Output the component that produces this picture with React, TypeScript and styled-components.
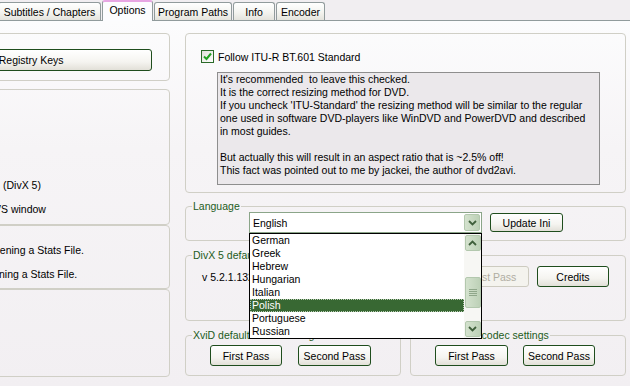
import React from "react";
import styled, { createGlobalStyle } from "styled-components";

const GlobalStyle = createGlobalStyle`
  html, body {
    margin: 0;
    padding: 0;
  }
  body {
    background: #f1eef1;
    font-family: "Liberation Sans", Arial, sans-serif;
    font-size: 10.5px;
    color: #000;
  }
`;

const Window = styled.div`
  width: 630px;
  height: 386px;
  overflow: hidden;
  display: flex;
  flex-direction: column;
`;

const TabStrip = styled.div`
  display: flex;
  align-items: flex-end;
  gap: 1px;
  height: 21px;
  margin-left: -2px;
`;

const Tab = styled.div<{ $w: number; $active?: boolean }>`
  position: relative;
  box-sizing: border-box;
  width: ${(p) => p.$w}px;
  height: ${(p) => (p.$active ? 21 : 18)}px;
  margin-bottom: ${(p) => (p.$active ? 0 : 1)}px;
  padding-bottom: ${(p) => (p.$active ? 3 : 0)}px;
  display: flex;
  align-items: center;
  justify-content: center;
  white-space: nowrap;
  border: 1px solid #919b9c;
  border-bottom: none;
  border-top: ${(p) => (p.$active ? "2px solid #e7a6e3" : "1px solid #919b9c")};
  border-radius: 3px 3px 0 0;
  background: ${(p) =>
    p.$active ? "#fcfcfe" : "linear-gradient(#ffffff, #f4f4f0 55%, #e4e3dd)"};
  z-index: ${(p) => (p.$active ? 2 : 1)};
`;

const Pane = styled.div`
  flex: 1;
  margin-top: -1px;
  border-top: 1px solid #919b9c;
  background: linear-gradient(#fcfcfd, #f6f4f6 35%, #f2eff2);
  display: flex;
  padding-top: 12px;
`;

const LeftCol = styled.div`
  width: 320px;
  margin-left: -150px;
  flex-shrink: 0;
  display: flex;
  flex-direction: column;
`;

const RightCol = styled.div`
  width: 441px;
  margin-left: 15px;
  flex-shrink: 0;
  display: flex;
  flex-direction: column;
`;

const Group = styled.fieldset<{ $h: number; $gap?: number; $w?: number }>`
  box-sizing: border-box;
  margin: ${(p) => p.$gap ?? 0}px 0 0 0;
  min-width: 0;
  width: ${(p) => (p.$w ? `${p.$w}px` : "auto")};
  height: ${(p) => p.$h}px;
  padding: 0;
  border: 1px solid #d0cfc6;
  border-radius: 4px;
`;

const Legend = styled.legend`
  margin-left: 6px;
  padding: 0 1px;
  color: #1d5c1b;
  line-height: 12px;
  white-space: nowrap;
`;

const Inner = styled.div<{ $pad: string; $gap?: number; $col?: boolean; $end?: boolean }>`
  display: flex;
  flex-direction: ${(p) => (p.$col ? "column" : "row")};
  justify-content: ${(p) => (p.$end ? "flex-end" : "flex-start")};
  align-items: ${(p) => (p.$col ? "stretch" : "center")};
  gap: ${(p) => p.$gap ?? 0}px;
  padding: ${(p) => p.$pad};
  box-sizing: border-box;
`;

const OptionRow = styled.div<{ $indent: number }>`
  height: 24px;
  display: flex;
  align-items: center;
  padding-left: ${(p) => p.$indent}px;
  white-space: nowrap;
`;

const Button = styled.button<{ $w: number; $h?: number }>`
  box-sizing: border-box;
  width: ${(p) => p.$w}px;
  height: ${(p) => p.$h ?? 21}px;
  padding: 0;
  font: inherit;
  color: #000;
  white-space: nowrap;
  border: 1px solid #1f4d1d;
  border-radius: 3px;
  background: linear-gradient(#ffffff, #f5f4f0 60%, #e2e0d8);
  flex-shrink: 0;

  &:disabled {
    color: #b0ada2;
    border-color: #cdcbc0;
    background: #f4f3ee;
  }
`;

const CheckRow = styled.label`
  display: flex;
  align-items: center;
  gap: 4px;
  height: 13px;
`;

const CheckBox = styled.span`
  box-sizing: border-box;
  width: 13px;
  height: 13px;
  border: 1px solid #2a6a28;
  background: linear-gradient(135deg, #e0e0da, #ffffff);
  display: flex;
  align-items: center;
  justify-content: center;
`;

const InfoBox = styled.div`
  box-sizing: border-box;
  width: 383px;
  height: 113px;
  margin: 9px 0 0 16px;
  padding: 0 2px;
  border: 1px solid #8e8e8e;
  background: #ebe8eb;
  line-height: 13px;
  white-space: pre;
`;

const ComboWrap = styled.div`
  position: relative;
  box-sizing: border-box;
  width: 233px;
  height: 21px;
  border: 1px solid #8ba589;
  background: #fff;
  display: flex;
  align-items: center;
  padding: 0 1px 0 3px;
`;

const ComboText = styled.span`
  flex: 1;
`;

const ArrowBtn = styled.span<{ $h?: number }>`
  box-sizing: border-box;
  width: 16px;
  height: ${(p) => p.$h ?? 17}px;
  border: 1px solid #b3c8ae;
  border-radius: 2px;
  background: linear-gradient(90deg, #d4e2ce, #bdd1b7);
  display: flex;
  align-items: center;
  justify-content: center;
  flex-shrink: 0;
`;

const DropList = styled.div`
  position: absolute;
  top: 20px;
  left: -1px;
  width: 233px;
  height: 106px;
  box-sizing: border-box;
  border: 1px solid #000;
  background: #fff;
  display: flex;
  z-index: 10;
`;

const Items = styled.div`
  flex: 1;
  display: flex;
  flex-direction: column;
`;

const Item = styled.div<{ $selected?: boolean }>`
  height: 13px;
  line-height: 13px;
  padding-left: 2px;
  color: ${(p) => (p.$selected ? "#fff" : "#000")};
  background: ${(p) => (p.$selected ? "#386833" : "transparent")};
  outline: ${(p) => (p.$selected ? "1px dotted #b9ccb4" : "none")};
  outline-offset: -1px;
`;

const ScrollBar = styled.div`
  width: 17px;
  display: flex;
  flex-direction: column;
  align-items: center;
  padding: 1px 0;
  box-sizing: border-box;
  background: #f7f7f4;
`;

const Track = styled.div`
  flex: 1;
`;

const Thumb = styled.div<{ $top: number }>`
  box-sizing: border-box;
  width: 16px;
  height: 31px;
  margin-top: ${(p) => p.$top}px;
  border: 1px solid #b3c8ae;
  border-radius: 2px;
  background: linear-gradient(90deg, #d4e2ce, #bdd1b7);
  display: flex;
  align-items: center;
  justify-content: center;
`;

const Version = styled.span`
  flex: 1;
  white-space: nowrap;
`;

const BottomRow = styled.div`
  display: flex;
  gap: 9px;
  margin-top: 8px;
`;

const Chevron = ({ up }: { up?: boolean }) => (
  <svg width="9" height="6" viewBox="0 0 9 6">
    <path
      d={up ? "M1 5 L4.5 1.5 L8 5" : "M1 1 L4.5 4.5 L8 1"}
      fill="none"
      stroke="#3f5f3b"
      strokeWidth="1.8"
    />
  </svg>
);

const Grip = () => (
  <svg width="8" height="8" viewBox="0 0 8 8">
    {[0.5, 2.5, 4.5, 6.5].map((y) => (
      <line key={y} x1="0" x2="8" y1={y} y2={y} stroke="#8fa78a" strokeWidth="1" />
    ))}
  </svg>
);

const Check = () => (
  <svg width="9" height="9" viewBox="0 0 9 9">
    <path d="M1 4.5 L3.5 7 L8 1.5" fill="none" stroke="#21a121" strokeWidth="2" />
  </svg>
);

const languages = ["German", "Greek", "Hebrew", "Hungarian", "Italian", "Polish", "Portuguese", "Russian"];

const infoText = [
  "It's recommended  to leave this checked.",
  "It is the correct resizing method for DVD.",
  "If you uncheck 'ITU-Standard' the resizing method will be similar to the regular",
  "one used in software DVD-players like WinDVD and PowerDVD and described",
  "in most guides.",
  "",
  "But actually this will result in an aspect ratio that is ~2.5% off!",
  "This fact was pointed out to me by jackei, the author of dvd2avi.",
].join("\n");

const App = () => {
  return (
    <>
      <GlobalStyle />
      <Window>
        <TabStrip>
          <Tab $w={103}>Subtitles / Chapters</Tab>
          <Tab $w={51} $active>
            Options
          </Tab>
          <Tab $w={78}>Program Paths</Tab>
          <Tab $w={42}>Info</Tab>
          <Tab $w={49}>Encoder</Tab>
        </TabStrip>

        <Pane>
          <LeftCol>
            <Group $h={48}>
              <Inner $pad="15px 17px 0 0" $end>
                <Button $w={275} $h={22}>
                  Delete Registry Keys
                </Button>
              </Inner>
            </Group>
            <Group $h={136} $gap={8}>
              <Inner $pad="83px 0 0 0" $col>
                <OptionRow $indent={152}>(DivX 5)</OptionRow>
                <OptionRow $indent={143}>VS window</OptionRow>
              </Inner>
            </Group>
            <Group $h={64}>
              <Inner $pad="12px 0 0 0" $col>
                <OptionRow $indent={143}>pening a Stats File.</OptionRow>
                <OptionRow $indent={148}>ning a Stats File.</OptionRow>
              </Inner>
            </Group>
            <Group $h={88} />
          </LeftCol>

          <RightCol>
            <Group $h={160}>
              <Inner $pad="16px 0 0 15px" $col>
                <CheckRow>
                  <CheckBox>
                    <Check />
                  </CheckBox>
                  Follow ITU-R BT.601 Standard
                </CheckRow>
                <InfoBox>{infoText}</InfoBox>
              </Inner>
            </Group>

            <Group $h={41} $gap={7}>
              <Legend>Language</Legend>
              <Inner $pad="0 0 0 63px" $gap={8}>
                <ComboWrap>
                  <ComboText>English</ComboText>
                  <ArrowBtn>
                    <Chevron />
                  </ArrowBtn>
                  <DropList>
                    <Items>
                      {languages.map((l) => (
                        <Item key={l} $selected={l === "Polish"}>
                          {l}
                        </Item>
                      ))}
                    </Items>
                    <ScrollBar>
                      <ArrowBtn $h={16}>
                        <Chevron up />
                      </ArrowBtn>
                      <Track>
                        <Thumb $top={26}>
                          <Grip />
                        </Thumb>
                      </Track>
                      <ArrowBtn $h={16}>
                        <Chevron />
                      </ArrowBtn>
                    </ScrollBar>
                  </DropList>
                </ComboWrap>
                <Button $w={73} $h={19}>
                  Update Ini
                </Button>
              </Inner>
            </Group>

            <Group $h={72} $gap={8}>
              <Legend>DivX 5 default codec settings</Legend>
              <Inner $pad="5px 16px 0 16px" $gap={8}>
                <Version>v 5.2.1.1328</Version>
                <Button $w={72} disabled>
                  First Pass
                </Button>
                <Button $w={72}>Credits</Button>
              </Inner>
            </Group>

            <BottomRow>
              <Group $h={47} $w={216}>
                <Legend>XviD default codec settings</Legend>
                <Inner $pad="4px 0 0 24px" $gap={16}>
                  <Button $w={72}>First Pass</Button>
                  <Button $w={73}>Second Pass</Button>
                </Inner>
              </Group>
              <Group $h={47} $w={216}>
                <Legend>Other default codec settings</Legend>
                <Inner $pad="4px 0 0 24px" $gap={15}>
                  <Button $w={73}>First Pass</Button>
                  <Button $w={72}>Second Pass</Button>
                </Inner>
              </Group>
            </BottomRow>
          </RightCol>
        </Pane>
      </Window>
    </>
  );
};

export default App;
